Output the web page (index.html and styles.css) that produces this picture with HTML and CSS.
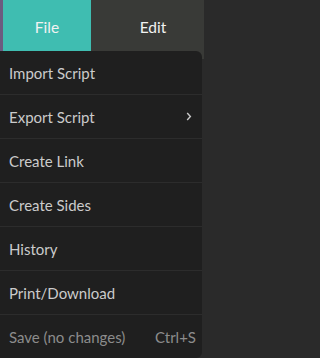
FILE: index.html
```html
<!DOCTYPE html>
<html>
<head>
<meta charset="utf-8">
<link rel="stylesheet" href="styles.css">
</head>
<body>
<div class="page">
  <div class="topbar">
    <div class="strip"></div>
    <div class="tab tab-file">File</div>
    <div class="tab tab-edit">Edit</div>
  </div>
  <div class="stage">
    <div class="menu">
      <div class="item">Import Script</div>
      <div class="item"><span>Export Script</span><svg class="chev" width="6" height="9" viewBox="0 0 6 9"><path d="M1.2 1 L4.4 4.5 L1.2 8" fill="none" stroke="#c9c9c9" stroke-width="1.4"/></svg></div>
      <div class="item">Create Link</div>
      <div class="item">Create Sides</div>
      <div class="item">History</div>
      <div class="item">Print/Download</div>
      <div class="item disabled"><span>Save (no changes)</span><span class="kbd">Ctrl+S</span></div>
    </div>
  </div>
</div>
</body>
</html>
```
FILE: styles.css
```css
html, body {
  margin: 0;
  padding: 0;
  background: #2a2a2a;
  font-family: Lato, "Open Sans", sans-serif;
  overflow: hidden;
}
.page {
  width: 204px;
  height: 358px;
  overflow: hidden;
  background: #2a2a2a;
}
.topbar {
  display: flex;
  height: 51px;
  background: #393a37;
}
.strip {
  width: 3px;
  background: #6b5b80;
}
.tab {
  display: flex;
  align-items: center;
  justify-content: center;
  color: #f2f2f2;
  font-size: 15.5px;
  padding-top: 2px;
  box-sizing: border-box;
}
.tab-file {
  width: 88px;
  background: #3fbdb1;
}
.tab-edit {
  flex: 1;
  padding-left: 11px;
}
.stage {
  background: linear-gradient(#393a37 0, #393a37 8px, #2a2a2a 8px);
}
.menu {
  width: 202px;
  background: #1f1f1f;
  border-radius: 0 6px 6px 0;
}
.item {
  display: flex;
  align-items: center;
  justify-content: space-between;
  height: 43px;
  padding: 0 6px 0 9px;
  border-bottom: 1px solid #2c2c2c;
  color: #cbcbcb;
  font-size: 15px;
}
.item:last-child {
  border-bottom: none;
}
.chev {
  margin-right: 4px;
}
.disabled {
  color: #8c8c8c;
}
.kbd {
  color: #8c8c8c;
}
```
